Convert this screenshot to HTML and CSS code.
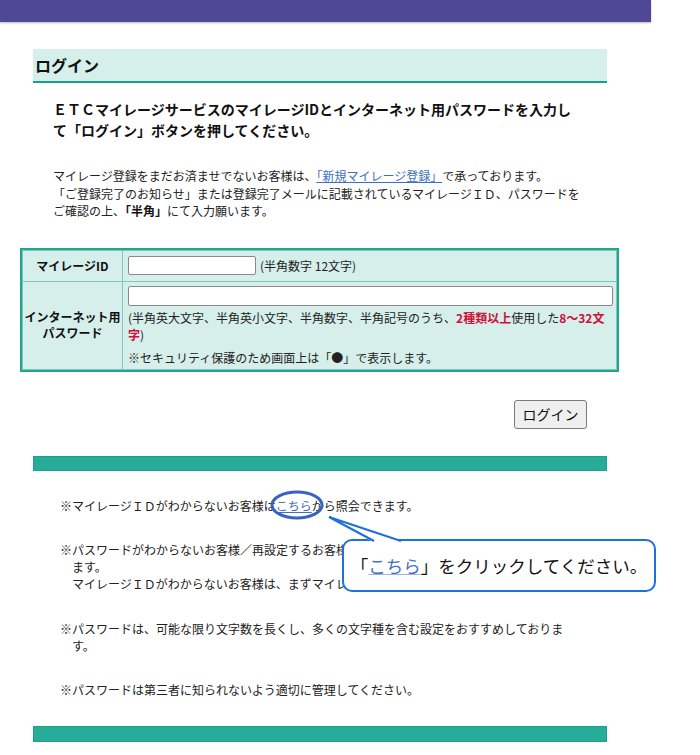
FILE: index.html
```html
<!DOCTYPE html>
<html lang="ja">
<head>
<meta charset="utf-8">
<title>ログイン</title>
<link rel="stylesheet" href="styles.css">
</head>
<body>
<div class="canvas">
  <div class="topbar"></div>
  <main class="page">
    <h1 class="heading">ログイン</h1>
    <p class="lead">ＥＴＣマイレージサービスのマイレージIDとインターネット用パスワードを入力し<br>て「ログイン」ボタンを押してください。</p>
    <p class="intro">マイレージ登録をまだお済ませでないお客様は、<a href="#" class="link">「新規マイレージ登録」</a>で承っております。<br>「ご登録完了のお知らせ」または登録完了メールに記載されているマイレージＩＤ、パスワードを<br>ご確認の上、<strong>「半角」</strong>にて入力願います。</p>

    <div class="form-table">
      <div class="label">マイレージID</div>
      <div class="value row1">
        <input type="text" class="input-id">
        <span class="hint">(半角数字 12文字)</span>
      </div>
      <div class="label">インターネット用<br>パスワード</div>
      <div class="value row2">
        <input type="password" class="input-pw">
        <p class="pw-rule">(半角英大文字、半角英小文字、半角数字、半角記号のうち、<em class="red">2種類以上</em>使用した<em class="red">8～32文<br>字</em>)</p>
        <p class="pw-note">※セキュリティ保護のため画面上は「●」で表示します。</p>
      </div>
    </div>

    <div class="actions">
      <button type="button" class="btn">ログイン</button>
    </div>

    <div class="bar"></div>

    <ul class="notes">
      <li>※マイレージＩＤがわからないお客様は<a href="#" class="link">こちら</a>から照会できます。</li>
      <li>※パスワードがわからないお客様／再設定するお客様はこちらからパスワードの再設定ができます。<br>マイレージＩＤがわからないお客様は、まずマイレージＩＤを照会してください。</li>
      <li>※パスワードは、可能な限り文字数を長くし、多くの文字種を含む設定をおすすめしております。</li>
      <li>※パスワードは第三者に知られないよう適切に管理してください。</li>
    </ul>

    <div class="bar bar-bottom"></div>
  </main>

  <div class="callout">「<span class="callout-link">こちら</span>」をクリックしてください。</div>
  <svg class="overlay" width="700" height="755" viewBox="0 0 700 755" aria-hidden="true">
    <ellipse cx="297" cy="505" rx="25" ry="13" fill="none" stroke="#3a63bd" stroke-width="3"/>
    <polygon points="329,517 402,542 373,542" fill="#fff"/>
    <path d="M374 541 L329 517 L401 541" fill="none" stroke="#1f6fdc" stroke-width="2" stroke-linejoin="miter"/>
  </svg>
</div>
</body>
</html>
```
FILE: styles.css
```css
* { box-sizing: border-box; }
html, body { margin: 0; padding: 0; background: #fff; }
body {
  font-family: "Noto Sans CJK JP", sans-serif;
  color: #222;
  font-size: 12px;
}
.canvas {
  position: relative;
  width: 700px;
  height: 755px;
  overflow: hidden;
}
.topbar {
  width: 651px;
  height: 22px;
  background: #4f4896;
  box-shadow: 0 1px 2px rgba(0, 0, 0, 0.28);
}
.page {
  width: 599px;
  margin-left: 20px;
}
.heading {
  margin: 27px 12px 0 13px;
  height: 34px;
  padding-left: 2px;
  font-size: 16px;
  line-height: 32px;
  font-weight: bold;
  color: #111;
  background: #d5efea;
  border-bottom: 2px solid #17a08a;
}
.lead {
  margin: 16px 0 0 33px;
  font-size: 14px;
  line-height: 21px;
  font-weight: bold;
  color: #111;
}
.intro {
  margin: 26px 0 0 33px;
  font-size: 12px;
  line-height: 17.5px;
}
.link {
  color: #3b6fc0;
  text-decoration: underline;
}
.intro strong { font-weight: bold; color: #111; }

.form-table {
  margin-top: 28px;
  display: grid;
  grid-template-columns: 99px 1fr;
  gap: 1px;
  padding: 1px;
  border: 2px solid #22a58e;
  background: #7ccabb;
}
.label, .value { background: #d6efeb; }
.label {
  display: flex;
  align-items: center;
  justify-content: center;
  text-align: center;
  font-weight: bold;
  font-size: 12px;
  line-height: 16px;
  color: #111;
}
.value { padding: 0 3px 0 5px; }
.row1 {
  height: 30px;
  display: flex;
  align-items: center;
}
.input-id, .input-pw {
  display: block;
  margin: 0;
  padding: 0 3px;
  background: #fff;
  border: 1px solid #8a8a8a;
  border-radius: 2px;
  font: inherit;
}
.input-id { width: 128px; height: 19px; }
.hint { margin-left: 4px; line-height: 17px; }
.row2 { padding-top: 4px; padding-bottom: 3px; }
.input-pw { width: 485px; height: 20px; }
.pw-rule {
  margin: 3px 0 0;
  line-height: 17px;
}
.red {
  font-style: normal;
  font-weight: bold;
  color: #d0103a;
}
.pw-note {
  margin: 6px 0 0;
  line-height: 17px;
}

.actions {
  display: flex;
  justify-content: flex-end;
  margin: 28px 32px 0 0;
}
.btn {
  width: 73px;
  height: 29px;
  padding: 0;
  font-family: "Noto Sans CJK JP", sans-serif;
  font-size: 14px;
  color: #111;
  background: #efefef;
  border: 1px solid #7a7a7a;
  border-radius: 3px;
}
.bar {
  margin: 27px 12px 0 13px;
  height: 15px;
  background: #27ac9a;
  border: 1px solid #1f9f8b;
}
.notes {
  list-style: none;
  margin: 26px 0 0 40px;
  padding: 0 0 0 12px;
  width: 512px;
  font-size: 12px;
  line-height: 17px;
}
.notes li {
  text-indent: -12px;
  margin-bottom: 27.5px;
}
.notes li:last-child { margin-bottom: 0; }
.bar-bottom { margin-top: 27.5px; height: 16px; }

.callout {
  position: absolute;
  left: 342px;
  top: 539px;
  width: 314px;
  height: 53px;
  border: 2px solid #1f6fdc;
  border-radius: 10px;
  background: #fff;
  display: flex;
  align-items: center;
  justify-content: center;
  font-size: 17.5px;
  color: #111;
  white-space: nowrap;
}
.callout-link {
  color: #4470c4;
  text-decoration: underline;
  text-decoration-color: #9fb3df;
}
.overlay {
  position: absolute;
  left: 0;
  top: 0;
  pointer-events: none;
}
```
